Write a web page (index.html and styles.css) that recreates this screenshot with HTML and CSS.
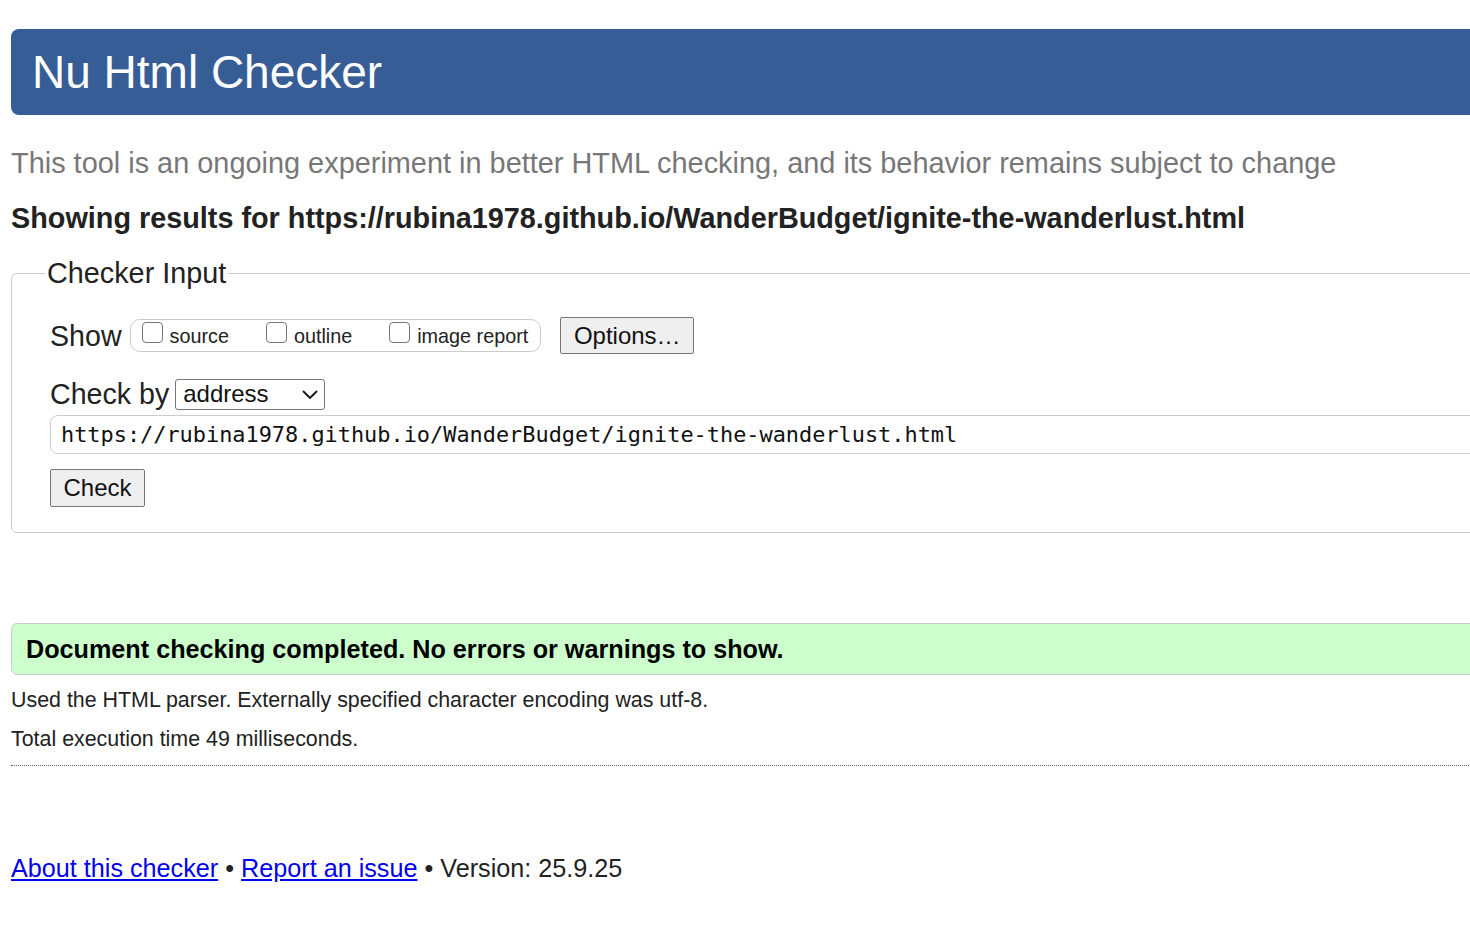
FILE: index.html
```html
<!DOCTYPE html>
<html lang="en">
<head>
<meta charset="utf-8">
<title>Nu Html Checker</title>
<link rel="stylesheet" href="styles.css">
</head>
<body>
<div class="page">
  <h1 class="banner">Nu Html Checker</h1>
  <p class="intro">This tool is an ongoing experiment in better HTML checking, and its behavior remains subject to change</p>
  <p class="showing">Showing results for https://rubina1978.github.io/WanderBudget/ignite-the-wanderlust.html</p>
  <fieldset class="input">
    <legend>Checker Input</legend>
    <div class="row show-row">
      <span class="label">Show</span>
      <span class="group">
        <label class="opt"><span class="box"></span>source</label>
        <label class="opt"><span class="box"></span>outline</label>
        <label class="opt"><span class="box"></span>image report</label>
      </span>
      <button class="btn options">Options…</button>
    </div>
    <div class="row by-row">
      <span class="label">Check by</span>
      <span class="select">address
        <svg class="chev" width="18" height="12" viewBox="0 0 18 12"><path d="M2 3 L9 10 L16 3" fill="none" stroke="#111" stroke-width="1.8"/></svg>
      </span>
    </div>
    <div class="url">https://rubina1978.github.io/WanderBudget/ignite-the-wanderlust.html</div>
    <button class="btn check">Check</button>
  </fieldset>
  <p class="success">Document checking completed. No errors or warnings to show.</p>
  <p class="info">Used the HTML parser. Externally specified character encoding was utf-8.</p>
  <p class="info">Total execution time 49 milliseconds.</p>
  <hr class="sep">
  <p class="footer"><a href="#">About this checker</a> • <a href="#">Report an issue</a> • Version: 25.9.25</p>
</div>
</body>
</html>
```
FILE: styles.css
```css
html, body {
  margin: 0;
  padding: 0;
  overflow: hidden;
  background: #fff;
}
body {
  font-family: "Liberation Sans", Arial, sans-serif;
  color: #222;
}
.page {
  padding: 29px 0 0 11px;
  width: 1500px;
}
.banner {
  margin: 0;
  background: #365d95;
  color: #fff;
  font-weight: normal;
  font-size: 46px;
  line-height: 86px;
  height: 86px;
  padding-left: 21px;
  border-radius: 8px;
}
.intro {
  margin: 31px 0 0;
  font-size: 28.9px;
  line-height: 34px;
  color: #777;
}
.showing {
  margin: 21px 0 0;
  font-size: 28.8px;
  line-height: 34px;
  font-weight: bold;
  color: #222;
}
.input {
  margin: 21px 0 0;
  border: 1px solid #ccc;
  border-radius: 6px;
  padding: 27px 0 25px 38px;
}
.input legend {
  font-size: 28.8px;
  line-height: 34px;
  padding: 0 2px;
  margin-left: -5px;
  color: #222;
}
.row {
  display: flex;
  align-items: center;
}
.label {
  font-size: 28.6px;
  line-height: 34px;
  color: #222;
}
.show-row {
  height: 37px;
}
.group {
  display: inline-flex;
  align-items: center;
  border: 1px solid #ccc;
  border-radius: 10px;
  height: 33px;
  box-sizing: border-box;
  margin-left: 8px;
  padding: 0 12px 0 11px;
  gap: 37px;
}
.opt {
  display: inline-flex;
  align-items: center;
  font-size: 19.8px;
  color: #222;
  position: relative;
  top: 1px;
}
.box {
  width: 21px;
  height: 21px;
  border: 1.5px solid #767676;
  border-radius: 4px;
  box-sizing: border-box;
  margin-right: 7px;
  position: relative;
  top: -4px;
}
.btn {
  font-family: "Liberation Sans", Arial, sans-serif;
  background: #efefef;
  border: 1px solid #767676;
  border-radius: 2px;
  color: #111;
  font-size: 24px;
  padding: 0;
}
.options {
  margin-left: 19px;
  width: 134px;
  height: 37px;
}
.by-row {
  margin-top: 23px;
  height: 34px;
}
.select {
  display: inline-flex;
  align-items: center;
  justify-content: space-between;
  margin-left: 6px;
  width: 150px;
  height: 31px;
  box-sizing: border-box;
  border: 1px solid #767676;
  border-radius: 3px;
  padding: 0 5px 0 7px;
  font-size: 24px;
  color: #111;
}
.url {
  margin-top: 4px;
  height: 39px;
  box-sizing: border-box;
  border: 1px solid #ccc;
  border-radius: 8px;
  font-family: "DejaVu Sans Mono", "Liberation Mono", monospace;
  font-size: 21.9px;
  line-height: 37px;
  padding-left: 10px;
  color: #111;
}
.check {
  margin-top: 15px;
  width: 95px;
  height: 38px;
  display: block;
}
.success {
  margin: 90px 0 0;
  background: #ccffcc;
  border: 1px solid #ccc;
  border-radius: 6px;
  height: 52px;
  box-sizing: border-box;
  line-height: 50px;
  padding-left: 14px;
  font-size: 25.2px;
  font-weight: bold;
  color: #000;
}
.info {
  margin: 12px 0 0;
  font-size: 21.4px;
  line-height: 26px;
  color: #222;
}
.info + .info {
  margin-top: 13px;
}
.sep {
  margin: 13px 0 0;
  border: 0;
  border-top: 1px dotted #666;
  height: 0;
}
.footer {
  margin: 87px 0 0;
  font-size: 25.2px;
  line-height: 30px;
  color: #222;
}
.footer a {
  color: #00e;
}
```
